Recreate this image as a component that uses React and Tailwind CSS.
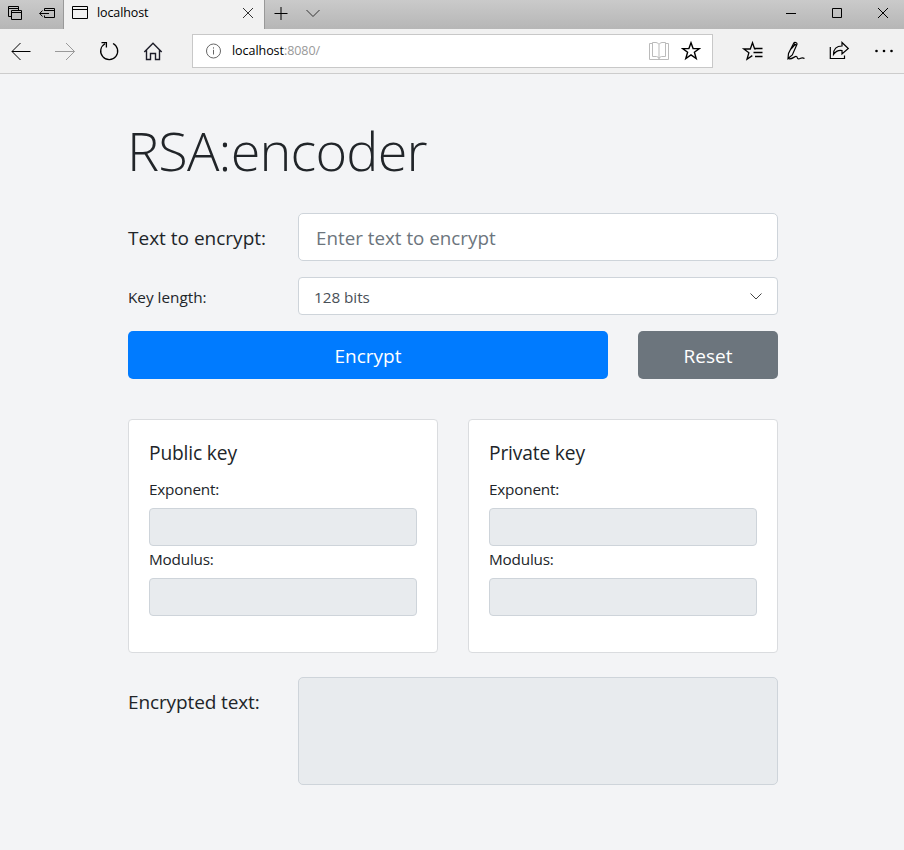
import React from 'react';

function Icon({ box, className = '', children, sw = 1 }) {
  const [, , w, h] = box.split(' ');
  return (
    <svg viewBox={box} width={w} height={h} fill="none" stroke="currentColor" strokeWidth={sw} className={`block shrink-0 ${className}`}>
      {children}
    </svg>
  );
}

function TitleBar() {
  return (
    <div className="flex h-[29px] bg-linear-to-b from-[#cacaca] to-[#b6b6b6] text-black">
      <div className="flex w-16 items-start gap-4 border-r border-[#999] pt-1.5 pl-2">
        <Icon box="0 0 15 15">
          <path d="M3.500 10.500H0.500V0.500H10.500V4.500M0.500 2.500H10.500M3.500 4.500H13.500V13.500H3.500ZM3.500 6.500H13.500" />
        </Icon>
        <Icon box="0 0 17 15">
          <path d="M5.500 5V2.500H15.500V11.500H5.500V9.500M5.500 4.500H15.500M0.700 7.500H10M3.500 4.500L0.700 7.500L3.500 10.500" />
        </Icon>
      </div>
      <div className="flex w-[200px] items-start bg-[#f1f1f1] pt-1.5 pl-2">
        <Icon box="0 0 17 14">
          <path d="M0.500 0.500H15.500V12.500H0.500ZM0.500 3.500H15.500" />
        </Icon>
        <span className="-mt-0.5 ml-2 w-[145px] text-[12.500px] leading-[18px] tracking-[-0.100px]">localhost</span>
        <Icon box="0 0 12 14" className="text-[#333]">
          <path d="M1 2L11 12M11 2L1 12" />
        </Icon>
      </div>
      <div className="flex items-start gap-[18px] border-l border-[#999] pt-1.5 pl-[9px]">
        <Icon box="0 0 14 14">
          <path d="M0.500 7.500H13.500M7 1V14" />
        </Icon>
        <Icon box="0 0 14 14" className="text-[#333]">
          <path d="M0.500 4L7 10.500L13.500 4" />
        </Icon>
      </div>
      <div className="ml-auto flex items-start pt-1.5">
        <Icon box="0 0 46 14"><path d="M18 7.500H28" /></Icon>
        <Icon box="0 0 46 14"><path d="M18.500 2.500H27.500V11.500H18.500Z" /></Icon>
        <Icon box="0 0 44 14"><path d="M18 2L28 12M28 2L18 12" /></Icon>
      </div>
    </div>
  );
}

function Toolbar() {
  return (
    <div className="flex h-[45px] items-start border-b border-[#ccc] bg-[#f1f1f1] pt-[5px] text-black">
      <div className="flex h-[34px] w-48 items-center">
        <Icon box="0 0 43 34"><path d="M12 17.500H30.500M20.500 9L12 17.500L20.500 26" /></Icon>
        <Icon box="-1 0 44 34" className="text-[#999]"><path d="M11 17.500H30.500M22 9L30.500 17.500L22 26" /></Icon>
        <Icon box="-1 0 44 34" sw={1.3}><path d="M17 9.700A8.500 8.500 0 1 0 25 9.500M13.500 8.700H18.400V13.500" /></Icon>
        <Icon box="-1 0 44 34" className="text-[#1c1c28]" sw={1.4}><path d="M12.300 18L21 9.300L29.700 18M14.500 16V25.500H18.500V19.500H23.500V25.500H27.500V16" /></Icon>
      </div>
      <div className="flex h-[34px] w-[521px] items-center border border-[#c8c8c8] bg-white pl-3">
        <Icon box="0 0 16 16" className="text-[#666]"><circle cx="8.500" cy="8" r="7" /><path d="M8.500 6.800V11.500M8.500 4.300V5.600" /></Icon>
        <span className="ml-[11px] text-[12.500px] leading-[18px] tracking-[-0.050px]">localhost<span className="text-[#999]">:8080/</span></span>
        <Icon box="0 0 20 20" className="ml-auto text-[#bbb]">
          <path d="M3.500 2.500H0.500V18.500H19.500V2.500H16.500M10 3.500V18M10 3.500Q9 1.500 7 1.500H3.500V15.500H7.500Q9 15.500 10 17.500Q11 15.500 12.500 15.500H16.500V1.500H13Q11 1.500 10 3.500" />
        </Icon>
        <Icon box="0 0 20 20" className="mr-[11px] ml-3" sw={1.4}>
          <path d="M10 1.800L12.100 7.600H18.300L13.400 11.300L15.200 17.600L10 13.900L4.800 17.600L6.600 11.300L1.700 7.600H7.900Z" />
        </Icon>
      </div>
      <div className="ml-[18px] flex h-[34px] items-center">
        <Icon box="0 0 43 34" sw={1.3}>
          <path d="M25 14.800H23.600L21.500 8.800L19.300 15H12.800L17.900 18.700L16 25.200L21.300 21.600M24 14.500H31.500M22.500 18.500H31.500M24 22.500H31.500" />
        </Icon>
        <Icon box="0 0 43 34" sw={1.2}>
          <path d="M14 24.500L14.500 19.500L19.800 9C20.500 7.700 23.500 8.500 23 10.200L18.300 21ZM19.500 9.500L22.500 11M17 15L21.500 10M14 24.500C18 26 20.500 22 22.300 22.500C24 23 22.500 24.800 24.500 24.800C27 24.800 27.500 22.500 30.500 24.500" />
        </Icon>
        <Icon box="0 0 44 34" sw={1.2}>
          <path d="M13.300 13V24.500H27.500V21.500M16.500 20.500C16.500 15 19.500 12 25 12V8.500L31.300 14.500L25 20V16.500C21.500 16 18.500 17.500 16.500 20.500Z" />
        </Icon>
        <Icon box="0 0 43 34"><g fill="currentColor" stroke="none"><circle cx="15.500" cy="17" r="1.300" /><circle cx="23" cy="17" r="1.300" /><circle cx="30.500" cy="17" r="1.300" /></g></Icon>
      </div>
    </div>
  );
}

function KeyCard({ title }) {
  return (
    <section className="h-[234px] w-[310px] rounded border border-[#dadcdf] bg-white p-5 pt-[21px]">
      <h5 className="mb-3 text-[19.200px] leading-6 tracking-[-0.150px]">{title}</h5>
      <label className="mb-[7px] block text-[15.300px] leading-6 tracking-[-0.200px]">Exponent:</label>
      <div className="h-[38px] rounded border border-[#ced4da] bg-[#e8ebee]" />
      <label className="mt-px mb-[7px] block text-[15.300px] leading-6 tracking-[-0.200px]">Modulus:</label>
      <div className="h-[38px] rounded border border-[#ced4da] bg-[#e8ebee]" />
    </section>
  );
}

export default function App() {
  return (
    <div className="h-[850px] w-[904px] overflow-hidden bg-[#f3f4f6] font-['Open_Sans','Noto_Sans',sans-serif] text-[#212529]">
      <TitleBar />
      <Toolbar />
      <main className="ml-32 w-[650px] pt-[43px]">
        <h1 className="-ml-px h-[67px] text-[54px] leading-[67px] font-light tracking-[-0.800px] whitespace-nowrap">RSA:encoder</h1>
        <div className="mt-[29px] flex h-12 items-center">
          <label className="w-[170px] pt-0.5 text-[19px] whitespace-nowrap">Text to encrypt:</label>
          <div className="flex h-12 w-[480px] items-center rounded-[5px] border border-[#ced4da] bg-white px-[17px] pt-0.5 text-[18.800px] text-[#6c757d]">Enter text to encrypt</div>
        </div>
        <div className="mt-4 flex h-[38px] items-center">
          <label className="w-[170px] pt-0.5 text-[15.300px]">Key length:</label>
          <div className="flex h-[38px] w-[480px] items-center justify-between rounded border border-[#ced4da] bg-white pr-[15px] pl-[15px] text-[15.300px] text-[#495057]">
            <span className="pt-0.5 tracking-[-0.050px]">128 bits</span>
            <Icon box="0 0 12 12" className="text-[#444]"><path d="M0.500 3.500L6 9L11.500 3.500" /></Icon>
          </div>
        </div>
        <div className="mt-4 flex gap-[30px] text-[19px] text-white">
          <button className="h-12 w-[480px] rounded-[5px] bg-[#007bff] pt-0.5">Encrypt</button>
          <button className="h-12 w-[140px] rounded-[5px] bg-[#6c757d] pt-0.5">Reset</button>
        </div>
        <div className="mt-10 flex gap-[30px]">
          <KeyCard title="Public key" />
          <KeyCard title="Private key" />
        </div>
        <div className="mt-6 flex">
          <label className="w-[170px] pt-[11px] text-[19px] leading-7 tracking-[-0.120px] whitespace-nowrap">Encrypted text:</label>
          <div className="h-[108px] w-[480px] rounded-[5px] border border-[#ced4da] bg-[#e8ebee]" />
        </div>
      </main>
    </div>
  );
}
